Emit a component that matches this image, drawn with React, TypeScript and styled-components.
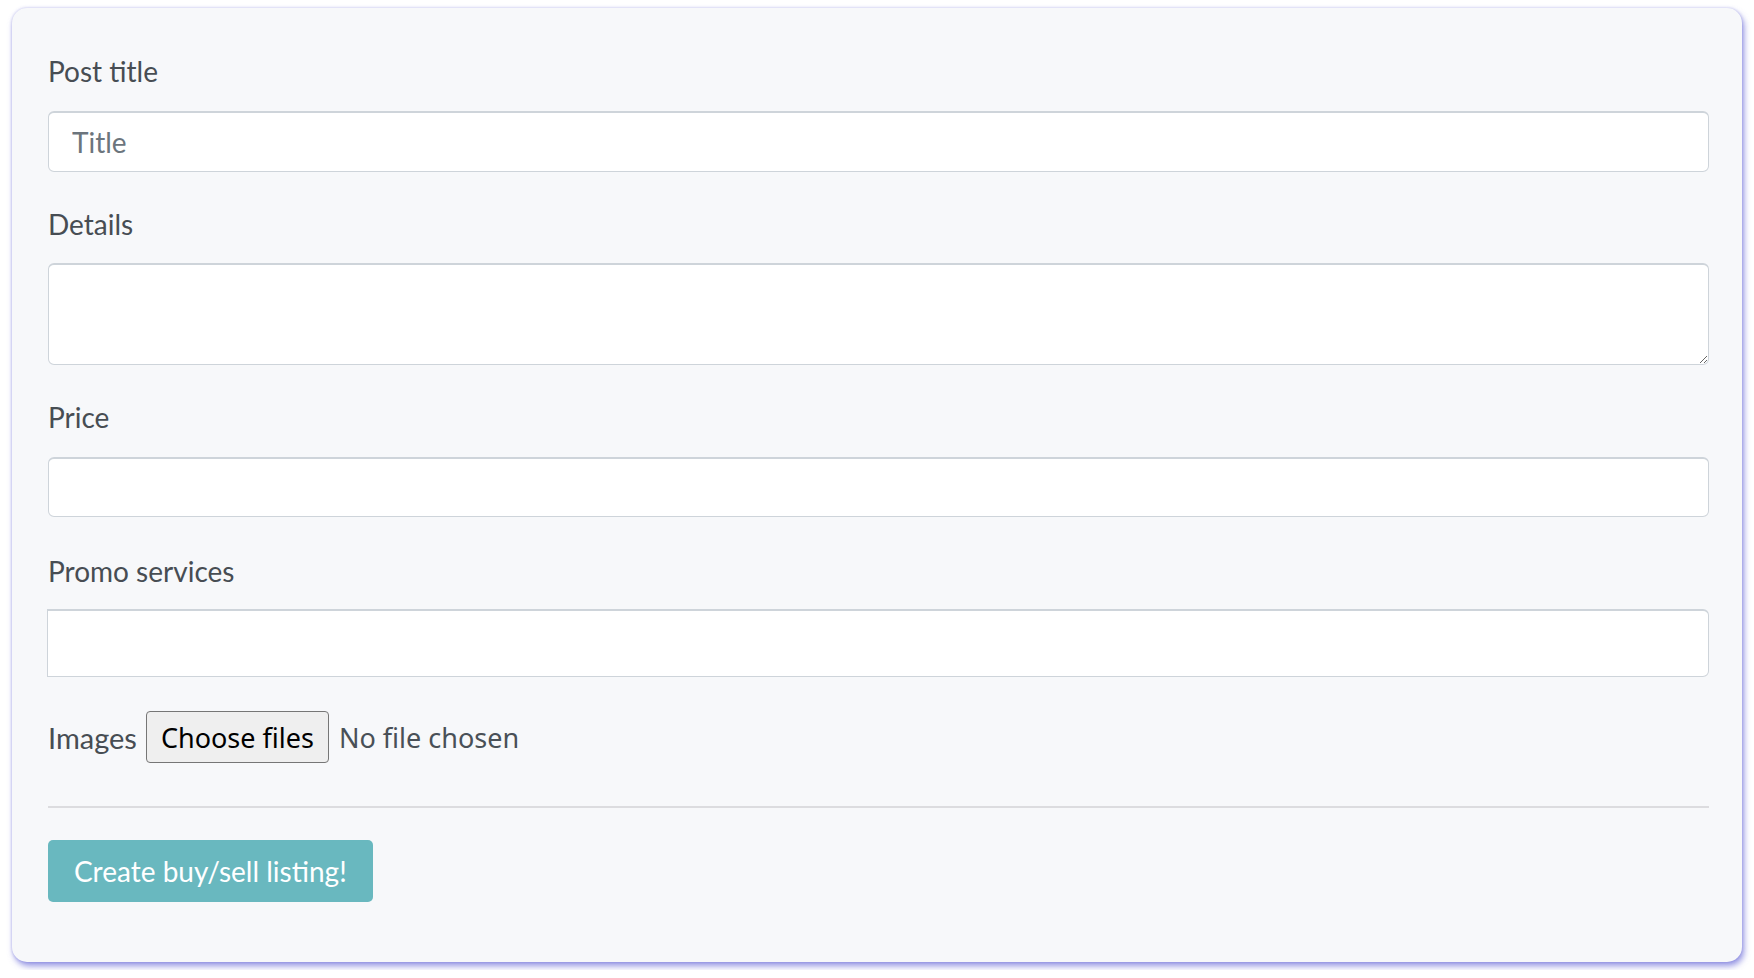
import React from "react";
import styled, { createGlobalStyle } from "styled-components";

const Global = createGlobalStyle`
  html, body { margin: 0; padding: 0; background: #ffffff; }
  body { padding: 8px 12px; font-family: "Lato", "Noto Sans", sans-serif; }
  * { box-sizing: border-box; }
`;

const Card = styled.form`
  background: #f7f8fa;
  border-radius: 15px;
  box-shadow: 2px 4px 6px rgba(105, 105, 215, 0.7), 0 0 3px rgba(110, 110, 215, 0.4);
  padding: 42px 33px 60px 36px;
  display: flex;
  flex-direction: column;
`;

const Field = styled.div<{ $gap: number }>`
  display: flex;
  flex-direction: column;
  margin-bottom: ${(p) => p.$gap}px;
`;

const Label = styled.label<{ $mb?: number }>`
  font-family: "Lato", "Noto Sans", sans-serif;
  font-size: 28px;
  line-height: 42px;
  color: #474d53;
  margin-bottom: ${(p) => p.$mb ?? 19}px;
`;

const TextInput = styled.input<{ $h: number }>`
  height: ${(p) => p.$h}px;
  width: 100%;
  border: 1.5px solid #ced4da;
  border-top-width: 2px;
  border-radius: 6px;
  background: #fff;
  padding: 0 23px;
  font-family: "Lato", "Noto Sans", sans-serif;
  font-size: 28px;
  color: #495057;
  outline: none;
  &::placeholder { color: #6c757d; }
`;

const SquareInput = styled(TextInput)`
  border-radius: 0 6px 6px 0;
  margin-left: -1px;
  width: calc(100% + 1px);
`;

const TextArea = styled.textarea`
  height: 102px;
  width: 100%;
  border: 1.5px solid #ced4da;
  border-top-width: 2px;
  border-radius: 6px;
  background: #fff;
  padding: 10px 23px;
  font-family: "Lato", "Noto Sans", sans-serif;
  font-size: 28px;
  color: #495057;
  outline: none;
  resize: vertical;
  display: block;
`;

const FileRow = styled.div`
  display: flex;
  align-items: center;
  height: 52px;
  margin-bottom: 43px;
`;

const RowLabel = styled.span`
  font-family: "Lato", "Noto Sans", sans-serif;
  font-size: 29px;
  color: #474d53;
  margin-right: 9px;
`;

const ChooseButton = styled.button`
  height: 52px;
  width: 183px;
  background: #efefef;
  border: 1.5px solid #767676;
  border-radius: 4px;
  font-family: "Noto Sans", "Open Sans", sans-serif;
  font-size: 27px;
  color: #000;
  padding: 0;
  margin-right: 10px;
`;

const FileStatus = styled.span`
  font-family: "Noto Sans", "Open Sans", sans-serif;
  font-size: 27px;
  color: #495057;
`;

const Divider = styled.hr`
  border: none;
  border-top: 2px solid #dcdcdf;
  margin: 0 0 32px 0;
  width: 100%;
`;

const Submit = styled.button`
  align-self: flex-start;
  height: 62px;
  padding: 0 26px;
  background: #69b8bf;
  border: none;
  border-radius: 5px;
  color: #fff;
  font-family: "Lato", "Noto Sans", sans-serif;
  font-size: 28px;
`;

export default function App() {
  return (
    <>
      <Global />
      <Card onSubmit={(e) => e.preventDefault()}>
        <Field $gap={31}>
          <Label>Post title</Label>
          <TextInput $h={61} placeholder="Title" />
        </Field>
        <Field $gap={31}>
          <Label $mb={18}>Details</Label>
          <TextArea />
        </Field>
        <Field $gap={33}>
          <Label>Price</Label>
          <TextInput $h={60} />
        </Field>
        <Field $gap={34}>
          <Label $mb={17}>Promo services</Label>
          <SquareInput $h={68} />
        </Field>
        <FileRow>
          <RowLabel>Images</RowLabel>
          <ChooseButton type="button">Choose files</ChooseButton>
          <FileStatus>No file chosen</FileStatus>
        </FileRow>
        <Divider />
        <Submit type="submit">Create buy/sell listing!</Submit>
      </Card>
    </>
  );
}
